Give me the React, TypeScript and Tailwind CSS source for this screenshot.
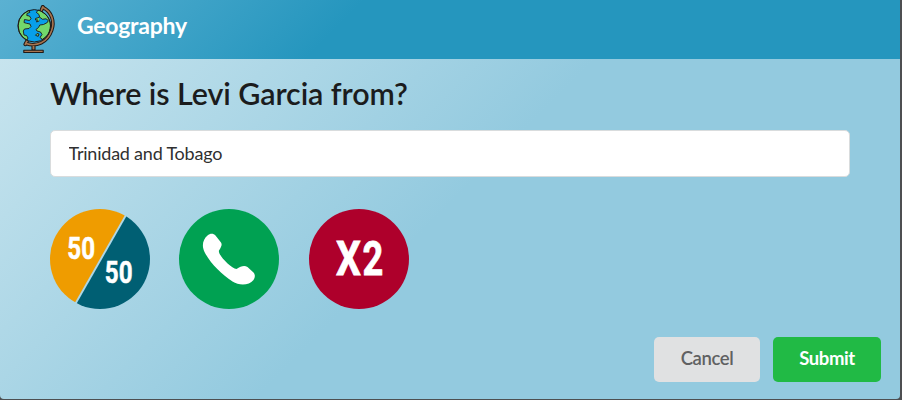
import React from "react";

function GlobeIcon() {
  return (
    <svg width="42" height="50" viewBox="0 0 42 50" className="block" aria-hidden="true">
      <g strokeLinecap="round" strokeLinejoin="round">
        <path d="M28 2.5 C36.5 6.5 40 16.5 36.6 25.5 C32.5 37.5 21.5 42 11 38.5" fill="none" stroke="#201a17" strokeWidth="3.6" />
        <path d="M17 40.5h3v4.5h-3z" fill="#a87550" stroke="#201a17" strokeWidth="1.1" />
        <path d="M8.8 45.2h19.4v2.3H8.8z" fill="#a87550" stroke="#201a17" strokeWidth="1.1" />
        <path d="M27.8 1.8 26 6.3M12.5 35 10.3 39.3" fill="none" stroke="#201a17" strokeWidth="3.8" />
        <path d="M28 2.5 C36.5 6.5 40 16.5 36.6 25.5 C32.5 37.5 21.5 42 11 38.5" fill="none" stroke="#a87550" strokeWidth="1.6" />
        <path d="M27.8 1.8 26 6.3M12.5 35 10.3 39.3" fill="none" stroke="#a87550" strokeWidth="1.7" />
        <circle cx="19.3" cy="20.8" r="16.2" fill="#079fe9" />
        <path d="M13.8 5.6 C7 8.3 3.1 14 3.1 20.8 C3.1 27.5 6.8 33 12 35.2 L13 33 11.5 30.5 9 30 8.3 26 9.5 24 14 23.5 16 21.5 15 19 11.5 18.3 9 17.5 9.5 14.5 14.5 15.5 16 13.5 14.5 11 11.8 10.5 12 8.5 14.5 7.5Z" fill="#72d86b" stroke="#201a17" strokeWidth=".9" />
        <path d="M23.8 5.2 C31 7.5 35.6 14 35.5 21 C35.4 27 32 32 27.5 34.5 L25 32.5 27 29.5 25.5 27 22 26 21 24.5 23.5 22.5 24.8 20 28.5 19.5 32.3 17.5 33.3 15.5 31 13.8 27.5 14.3 24.5 12 24 9.5 21.5 7.5Z" fill="#72d86b" stroke="#201a17" strokeWidth=".9" />
        <path d="M24.3 12.3 20.5 13.5 20.5 15 22.5 14.8 21.5 17 24 16M20.8 30l1.2-1.5 2 .5-.7 2Z" fill="#72d86b" stroke="#201a17" strokeWidth=".9" />
        <circle cx="19.3" cy="20.8" r="16.2" fill="none" stroke="#201a17" strokeWidth="1" />
      </g>
    </svg>
  );
}

function FiftyFifty() {
  return (
    <svg width="100" height="100" viewBox="0 0 100 100" className="block">
      <defs>
        <clipPath id="orange-half">
          <path d="M-20 -20H89.8L15.6 110H-20Z" />
        </clipPath>
        <clipPath id="teal-half">
          <path d="M92 -20H120V120H12.1Z" />
        </clipPath>
      </defs>
      <circle cx="50" cy="50" r="50" fill="#ef9c00" clipPath="url(#orange-half)" />
      <circle cx="50" cy="50" r="50" fill="#005f73" clipPath="url(#teal-half)" />
      <g fill="#fff" stroke="#fff" strokeWidth=".5" fontFamily="Roboto, sans-serif" fontWeight="700" fontSize="31">
        <text style={{ transform: "translate(17.3px,49.7px) scaleX(.78)" }}>50</text>
        <text style={{ transform: "translate(54.8px,73.7px) scaleX(.78)" }}>50</text>
      </g>
    </svg>
  );
}

function Phone() {
  return (
    <svg width="100" height="100" viewBox="0 0 100 100" className="block">
      <circle cx="50" cy="50" r="50" fill="#00a152" />
      <path d="M28.5 26.5 C31 24 34.5 24 36.5 26.5 L42 33.5 C43.3 35.5 42.5 37.5 40 41.5 C38.5 45.5 52 59.5 57.5 60 C62 57 65.5 56 68.5 58 L74.5 63.5 C76.3 65.5 76.3 68.5 74.5 71 C70 76.5 60.5 77 53.5 72.5 C42.5 65 31 54 25.5 43 C22.5 36.5 23.8 30.5 28.5 26.5Z" fill="#fff" />
    </svg>
  );
}

function DoubleUp() {
  return (
    <svg width="100" height="100" viewBox="0 0 100 100" className="block">
      <circle cx="50" cy="50" r="50" fill="#ae002b" />
      <g fill="#fff" stroke="#fff" strokeWidth=".8" fontFamily="Roboto, sans-serif" fontWeight="700" fontSize="49">
        <text style={{ transform: "translate(27px,66.2px) scaleX(.8)" }}>X</text>
        <text style={{ transform: "translate(53.5px,66.2px) scaleX(.74)" }}>2</text>
      </g>
    </svg>
  );
}

export default function App() {
  return (
    <div className="h-[400px] w-[902px] overflow-hidden bg-[#4d4f51] font-[Lato,sans-serif]">
      <div className="flex h-[399px] w-[900px] flex-col overflow-hidden rounded-b-[4px]">
        <header className="flex h-[59px] shrink-0 items-start bg-[linear-gradient(135deg,#5bb1d2_0%,#2596be_38%)] pl-[15px] pt-[5px]">
          <GlobeIcon />
          <h1 className="ml-[20px] mt-[6px] text-[23px] leading-[29px] font-bold tracking-[-0.25px] text-white">Geography</h1>
        </header>
        <main className="flex flex-1 flex-col bg-[linear-gradient(135deg,#c7e4ee_0%,#93cadf_48%)]">
          <h2 className="ml-[50px] mt-[15px] h-[40px] text-[30.5px] leading-[38px] font-semibold tracking-[-0.1px] text-[#1b1c1d]">Where is Levi Garcia from?</h2>
          <input
            defaultValue="Trinidad and Tobago"
            aria-label="Answer"
            className="ml-[50px] mt-[16px] h-[47px] w-[800px] shrink-0 rounded-[5px] border border-[#d9dcdd] bg-white px-[17.5px] pb-[2px] text-[18px] tracking-[-0.22px] text-[#303030] outline-none"
          />
          <div className="ml-[50px] mt-[32px] flex">
            <FiftyFifty />
            <div className="ml-[29px] mr-[30px]">
              <Phone />
            </div>
            <DoubleUp />
          </div>
          <div className="mt-[28px] mr-[19px] flex justify-end gap-[13px]">
            <button className="h-[45px] w-[106px] rounded-[5px] bg-[#e0e1e2] pb-[2px] text-[18.5px] font-semibold tracking-[-0.4px] text-[#606162]">Cancel</button>
            <button className="h-[45px] w-[108px] rounded-[5px] bg-[#21ba45] pb-[2px] text-[18.5px] font-bold tracking-[-0.4px] text-white">Submit</button>
          </div>
        </main>
      </div>
    </div>
  );
}
